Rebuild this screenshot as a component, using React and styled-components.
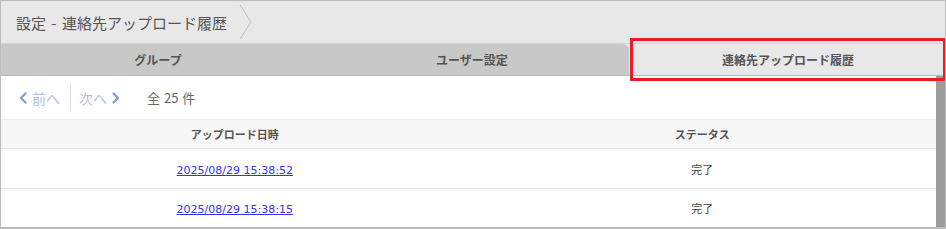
import React from "react";
import styled, { createGlobalStyle } from "styled-components";

const GlobalStyle = createGlobalStyle`
  html, body {
    margin: 0;
    padding: 0;
    background: #fff;
  }
  body {
    font-family: "Noto Sans CJK JP", "DejaVu Sans", sans-serif;
  }
`;

const rows = [
  { date: "2025/08/29 15:38:52", status: "完了" },
  { date: "2025/08/29 15:38:15", status: "完了" }
];

const tabs = [
  { label: "グループ" },
  { label: "ユーザー設定", last: true },
  { label: "連絡先アップロード履歴", active: true }
];

// small bold chevron used by the pager
const Chevron = ({ dir }) => (
  <ChevronIcon viewBox="0 0 8 12" width="8" height="12">
    <polyline
      points={dir === "left" ? "6.5,1.5 2,6 6.5,10.5" : "1.5,1.5 6,6 1.5,10.5"}
      fill="none"
      stroke="#7f9bd2"
      strokeWidth="2.2"
      strokeLinecap="round"
      strokeLinejoin="round"
    />
  </ChevronIcon>
);

const App = () => {
  return (
    <>
      <GlobalStyle />
      <Frame>
        <Header>
          <Title>設定 - 連絡先アップロード履歴</Title>
          <Crumb viewBox="0 0 14 36" width="14" height="36">
            <polyline points="1,1 12,18 1,35" fill="none" stroke="#bdbdbd" strokeWidth="1" />
          </Crumb>
        </Header>
        <TabBar>
          {tabs.map((tab, index) => (
            <Tab key={index} active={tab.active} last={tab.last}>
              {tab.label}
              {tab.active && <Highlight />}
            </Tab>
          ))}
        </TabBar>
        <Body>
          <Content>
            <Pager>
              <PageLink>
                <Chevron dir="left" /> 前へ
              </PageLink>
              <Divider />
              <PageLink>
                次へ <Chevron dir="right" />
              </PageLink>
              <Total>全 25 件</Total>
            </Pager>
            <Table>
              <thead>
                <tr>
                  <Th>アップロード日時</Th>
                  <Th>ステータス</Th>
                </tr>
              </thead>
              <tbody>
                {rows.map((row, index) => (
                  <Row key={index}>
                    <Td>
                      <DateLink href="#">{row.date}</DateLink>
                    </Td>
                    <Td>{row.status}</Td>
                  </Row>
                ))}
              </tbody>
            </Table>
          </Content>
          <Scrollbar />
        </Body>
      </Frame>
    </>
  );
};

export default App;

const Frame = styled.div`
  width: 946px;
  height: 229px;
  box-sizing: border-box;
  border: 1px solid #bcbcbc;
  border-bottom-width: 2px;
  display: flex;
  flex-direction: column;
  overflow: hidden;
  background: #fff;
`;

const Header = styled.div`
  height: 42px;
  flex: none;
  background: #e8e8e8;
  border-bottom: 1px solid #d4d4d4;
  display: flex;
  align-items: center;
  padding-left: 15px;
`;

const Title = styled.div`
  font-size: 15px;
  color: #555;
  word-spacing: 2px;
  white-space: nowrap;
`;

const Crumb = styled.svg`
  margin-left: 12px;
  display: block;
`;

const TabBar = styled.div`
  height: 31px;
  flex: none;
  display: flex;
  background: #e8e8e8;
  border-bottom: 1px solid #b9b9b9;
`;

const Tab = styled.div`
  position: relative;
  flex: 1;
  display: flex;
  align-items: center;
  justify-content: center;
  font-size: 12px;
  font-weight: bold;
  color: #555;
  background: ${props => (props.active ? "#e8e8e8" : "#c8c8c8")};
  border-top-right-radius: ${props => (props.last ? "6px" : "0")};
  margin-left: ${props => (props.active ? "2px" : "0")};
`;

const Highlight = styled.span`
  position: absolute;
  left: -1px;
  right: -1px;
  top: -6px;
  bottom: -6px;
  border: 3px solid #ec1c24;
  pointer-events: none;
`;

const Body = styled.div`
  flex: 1;
  display: flex;
  min-height: 0;
`;

const Content = styled.div`
  flex: 1;
  display: flex;
  flex-direction: column;
`;

const Scrollbar = styled.div`
  width: 9px;
  flex: none;
  background: #9c9c9c;
`;

const Pager = styled.div`
  height: 43px;
  flex: none;
  display: flex;
  align-items: center;
  padding-left: 18px;
  border-bottom: 1px solid #ececec;
`;

const PageLink = styled.span`
  color: #b0bed9;
  font-size: 14px;
  display: flex;
  align-items: center;
  gap: 5px;
`;

const ChevronIcon = styled.svg`
  display: block;
`;

const Divider = styled.span`
  width: 1px;
  height: 27px;
  background: #dedede;
  margin: 0 8px 0 10px;
`;

const Total = styled.span`
  color: #666;
  font-size: 13px;
  margin-left: 27px;
  word-spacing: 1px;
`;

const Table = styled.table`
  width: 100%;
  border-collapse: collapse;
  table-layout: fixed;
`;

const Th = styled.th`
  height: 28px;
  padding: 0;
  background: #f7f7f7;
  border-bottom: 1px solid #e6e6e6;
  font-size: 11px;
  font-weight: bold;
  color: #555;
  text-align: center;
`;

const Row = styled.tr`
  & + & td {
    height: 37px;
    border-bottom: none;
  }
`;

const Td = styled.td`
  height: 39px;
  padding: 0;
  border-bottom: 1px solid #e6e6e6;
  font-size: 11px;
  color: #444;
  text-align: center;
`;

const DateLink = styled.a`
  font-family: "DejaVu Sans", Verdana, sans-serif;
  font-size: 11px;
  color: #3333ee;
  text-decoration: underline;
`;
